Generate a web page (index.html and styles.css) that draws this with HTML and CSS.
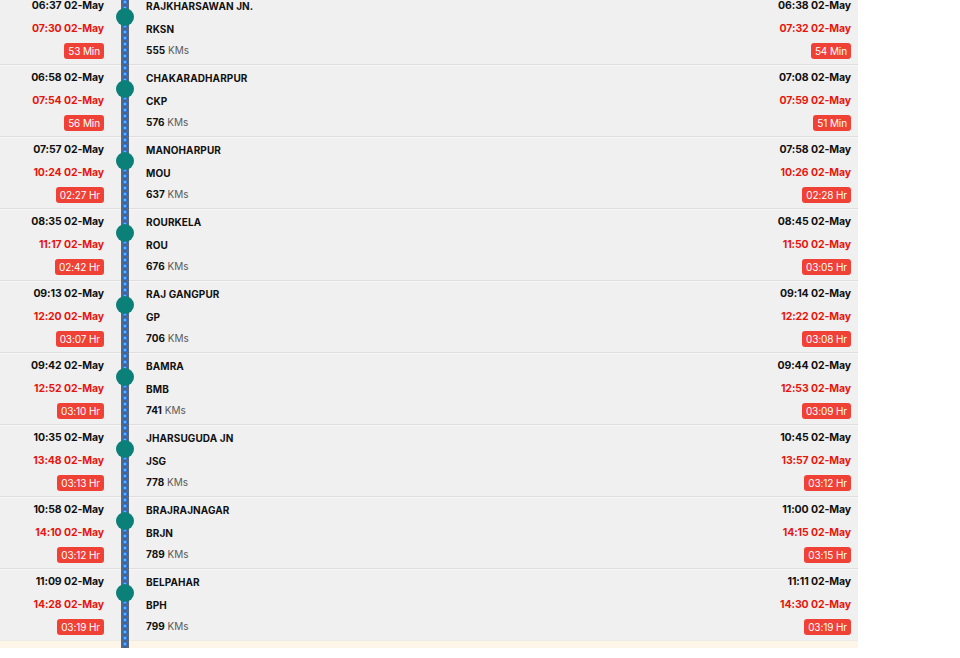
FILE: index.html
```html
<!DOCTYPE html>
<html>
<head>
<meta charset="utf-8">
<link rel="stylesheet" href="styles.css">
</head>
<body>
<div class="list">
  <div class="row">
    <div class="col left"><span class="t">06:37 02-May</span><span class="t red">07:30 02-May</span><span class="badge">53 Min</span></div>
    <div class="line"><span class="dot"></span></div>
    <div class="col mid"><span class="st">RAJKHARSAWAN JN.</span><span class="st">RKSN</span><span class="km"><b>555</b> KMs</span></div>
    <div class="col right"><span class="t">06:38 02-May</span><span class="t red">07:32 02-May</span><span class="badge">54 Min</span></div>
  </div>
  <div class="row">
    <div class="col left"><span class="t">06:58 02-May</span><span class="t red">07:54 02-May</span><span class="badge">56 Min</span></div>
    <div class="line"><span class="dot"></span></div>
    <div class="col mid"><span class="st">CHAKARADHARPUR</span><span class="st">CKP</span><span class="km"><b>576</b> KMs</span></div>
    <div class="col right"><span class="t">07:08 02-May</span><span class="t red">07:59 02-May</span><span class="badge">51 Min</span></div>
  </div>
  <div class="row">
    <div class="col left"><span class="t">07:57 02-May</span><span class="t red">10:24 02-May</span><span class="badge">02:27 Hr</span></div>
    <div class="line"><span class="dot"></span></div>
    <div class="col mid"><span class="st">MANOHARPUR</span><span class="st">MOU</span><span class="km"><b>637</b> KMs</span></div>
    <div class="col right"><span class="t">07:58 02-May</span><span class="t red">10:26 02-May</span><span class="badge">02:28 Hr</span></div>
  </div>
  <div class="row">
    <div class="col left"><span class="t">08:35 02-May</span><span class="t red">11:17 02-May</span><span class="badge">02:42 Hr</span></div>
    <div class="line"><span class="dot"></span></div>
    <div class="col mid"><span class="st">ROURKELA</span><span class="st">ROU</span><span class="km"><b>676</b> KMs</span></div>
    <div class="col right"><span class="t">08:45 02-May</span><span class="t red">11:50 02-May</span><span class="badge">03:05 Hr</span></div>
  </div>
  <div class="row">
    <div class="col left"><span class="t">09:13 02-May</span><span class="t red">12:20 02-May</span><span class="badge">03:07 Hr</span></div>
    <div class="line"><span class="dot"></span></div>
    <div class="col mid"><span class="st">RAJ GANGPUR</span><span class="st">GP</span><span class="km"><b>706</b> KMs</span></div>
    <div class="col right"><span class="t">09:14 02-May</span><span class="t red">12:22 02-May</span><span class="badge">03:08 Hr</span></div>
  </div>
  <div class="row">
    <div class="col left"><span class="t">09:42 02-May</span><span class="t red">12:52 02-May</span><span class="badge">03:10 Hr</span></div>
    <div class="line"><span class="dot"></span></div>
    <div class="col mid"><span class="st">BAMRA</span><span class="st">BMB</span><span class="km"><b>741</b> KMs</span></div>
    <div class="col right"><span class="t">09:44 02-May</span><span class="t red">12:53 02-May</span><span class="badge">03:09 Hr</span></div>
  </div>
  <div class="row">
    <div class="col left"><span class="t">10:35 02-May</span><span class="t red">13:48 02-May</span><span class="badge">03:13 Hr</span></div>
    <div class="line"><span class="dot"></span></div>
    <div class="col mid"><span class="st">JHARSUGUDA JN</span><span class="st">JSG</span><span class="km"><b>778</b> KMs</span></div>
    <div class="col right"><span class="t">10:45 02-May</span><span class="t red">13:57 02-May</span><span class="badge">03:12 Hr</span></div>
  </div>
  <div class="row">
    <div class="col left"><span class="t">10:58 02-May</span><span class="t red">14:10 02-May</span><span class="badge">03:12 Hr</span></div>
    <div class="line"><span class="dot"></span></div>
    <div class="col mid"><span class="st">BRAJRAJNAGAR</span><span class="st">BRJN</span><span class="km"><b>789</b> KMs</span></div>
    <div class="col right"><span class="t">11:00 02-May</span><span class="t red">14:15 02-May</span><span class="badge">03:15 Hr</span></div>
  </div>
  <div class="row">
    <div class="col left"><span class="t">11:09 02-May</span><span class="t red">14:28 02-May</span><span class="badge">03:19 Hr</span></div>
    <div class="line"><span class="dot"></span></div>
    <div class="col mid"><span class="st">BELPAHAR</span><span class="st">BPH</span><span class="km"><b>799</b> KMs</span></div>
    <div class="col right"><span class="t">11:11 02-May</span><span class="t red">14:30 02-May</span><span class="badge">03:19 Hr</span></div>
  </div>
  <div class="row cream">
    <div class="col left"></div>
    <div class="line"></div>
    <div class="col mid"></div>
    <div class="col right"></div>
  </div>
</div>
</body>
</html>
```

FILE: styles.css
```css
html, body {
  margin: 0;
  padding: 0;
  background: #ffffff;
}
body {
  font-family: "Inter", "Liberation Sans", sans-serif;
  color: #111;
}
.list {
  width: 858px;
  margin-top: -8px;
}
.row {
  display: grid;
  grid-template-columns: 104px 8px 1fr auto;
  column-gap: 17px;
  height: 71px;
  padding-right: 7px;
  background: #f0f0f0;
  border-top: 1px solid #dedede;
  box-shadow: inset 0 1px 0 #f7f7f7;
}
.row.cream {
  background: #fdf5e8;
  height: 7px;
  border-top: 1px solid #ecebe8;
  box-shadow: none;
}
.col {
  display: flex;
  flex-direction: column;
  padding-top: 6px;
}
.left, .right {
  align-items: flex-end;
}
.mid {
  align-items: flex-start;
}
.t, .st, .km {
  height: 14px;
  line-height: 14px;
  font-size: 10px;
  font-weight: 700;
  margin-bottom: 9px;
  white-space: nowrap;
}
.t {
  font-size: 10.5px;
  letter-spacing: -0.1px;
}
.st {
  font-size: 10px;
  letter-spacing: 0.1px;
}
.red {
  color: #e8150e;
}
.badge {
  height: 16px;
  line-height: 16px;
  padding: 0 4px;
  border-radius: 3px;
  background: #ef4136;
  color: #fff;
  font-size: 10px;
  font-weight: 400;
  letter-spacing: -0.1px;
  margin-top: -2px;
}
.km {
  font-weight: 400;
  color: #5a5a5a;
  margin-top: -2px;
}
.km b {
  color: #111;
  font-weight: 700;
}
.line {
  display: flex;
  justify-content: center;
  align-items: flex-start;
  background-color: #5e6874;
  background-image: radial-gradient(circle at 50% 50%, #9ad6ff 0, #3a8cf0 1.3px, #1d63c2 2.4px, transparent 3px);
  background-size: 8px 6px;
  background-position: 0 1px;
  margin-top: -1px;
  height: 73px;
}
.cream .line {
  height: 20px;
}
.dot {
  flex-shrink: 0;
  width: 18px;
  height: 18px;
  border-radius: 50%;
  background: #0b8079;
  margin-top: 16px;
}
```
